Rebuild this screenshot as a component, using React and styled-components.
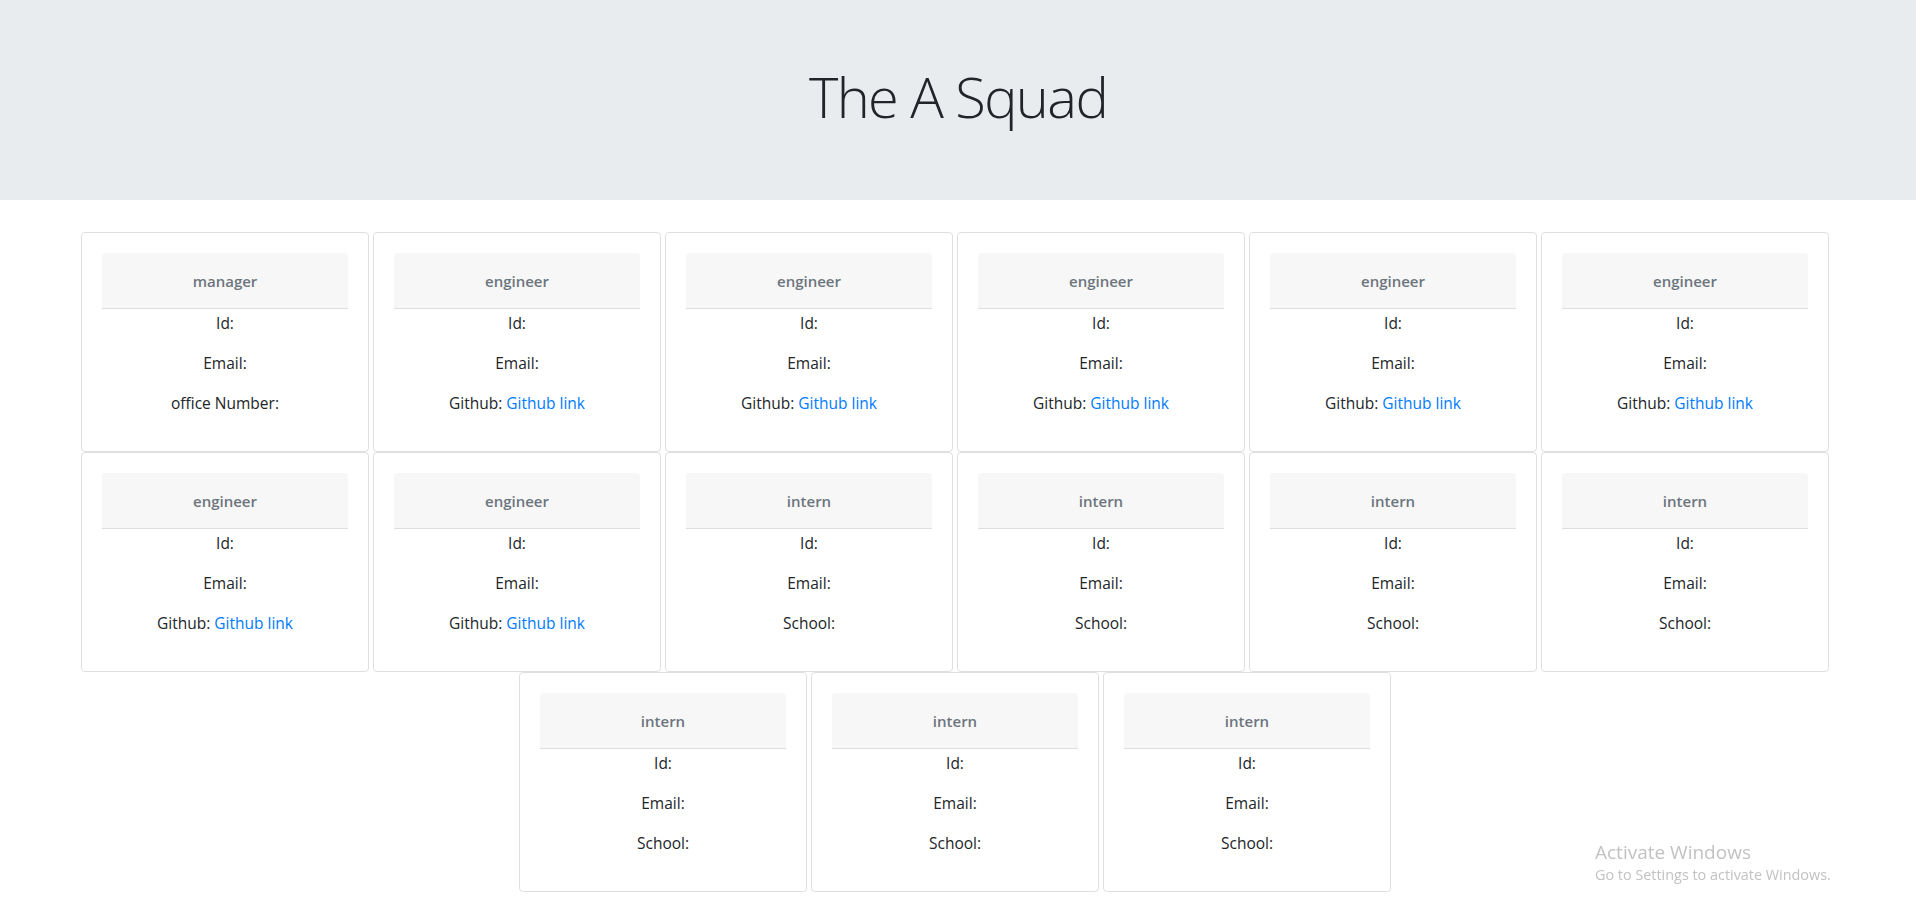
import React from "react";
import styled, { createGlobalStyle } from "styled-components";

const team = [
  { role: "manager", extra: "office Number:" },
  { role: "engineer", github: true },
  { role: "engineer", github: true },
  { role: "engineer", github: true },
  { role: "engineer", github: true },
  { role: "engineer", github: true },
  { role: "engineer", github: true },
  { role: "engineer", github: true },
  { role: "intern", extra: "School:" },
  { role: "intern", extra: "School:" },
  { role: "intern", extra: "School:" },
  { role: "intern", extra: "School:" },
  { role: "intern", extra: "School:" },
  { role: "intern", extra: "School:" },
  { role: "intern", extra: "School:" },
];

const App = () => {
  return (
    <>
      <GlobalStyle />
      <Jumbotron>
        <Title>The A Squad</Title>
      </Jumbotron>
      <Wrapper>
        <CardGrid>
          {team.map((member, i) => (
            <Card key={i}>
              <CardHeader>{member.role}</CardHeader>
              <CardBody>
                <Line>Id:</Line>
                <Line>Email:</Line>
                {member.github ? (
                  <Line>
                    Github: <Link href="#">Github link</Link>
                  </Line>
                ) : (
                  <Line>{member.extra}</Line>
                )}
              </CardBody>
            </Card>
          ))}
        </CardGrid>
      </Wrapper>
      <Watermark>
        <WatermarkTitle>Activate Windows</WatermarkTitle>
        <WatermarkText>Go to Settings to activate Windows.</WatermarkText>
      </Watermark>
    </>
  );
};

const GlobalStyle = createGlobalStyle`
  body {
    margin: 0;
    background: #fff;
    color: #212529;
    font-family: "Open Sans", "Noto Sans", sans-serif;
    font-size: 15.5px;
    line-height: 1.5;
  }
`;

const Jumbotron = styled.header`
  height: 200px;
  background-color: #e9ecef;
  display: flex;
  align-items: center;
  justify-content: center;
  margin-bottom: 32px;
  padding-bottom: 6px;
  box-sizing: border-box;
`;

const Title = styled.h1`
  margin: 0;
  font-size: 56px;
  font-weight: 300;
  line-height: 1.2;
  letter-spacing: -1.6px;
  color: #212529;
`;

const Wrapper = styled.main`
  padding-right: 6px;
`;

const CardGrid = styled.div`
  width: 1752px;
  margin: 0 auto;
  display: flex;
  flex-wrap: wrap;
  justify-content: center;
`;

const Card = styled.div`
  box-sizing: border-box;
  width: 288px;
  height: 220px;
  margin: 0 2px;
  padding: 20px;
  border: 1px solid rgba(0, 0, 0, 0.125);
  border-radius: 4px;
  text-align: center;
`;

const CardHeader = styled.div`
  box-sizing: border-box;
  height: 56px;
  padding-top: 2px;
  display: flex;
  align-items: center;
  justify-content: center;
  background-color: #f7f7f7;
  border-bottom: 1px solid #dfdfdf;
  border-radius: 3px 3px 0 0;
  color: #6c757d;
  font-size: 15px;
  font-weight: 600;
`;

const CardBody = styled.div`
  padding-top: 2px;
`;

const Line = styled.p`
  margin: 0 0 16px;
  line-height: 24px;
`;

const Link = styled.a`
  color: #007bff;
  text-decoration: none;
`;

const Watermark = styled.div`
  position: fixed;
  left: 1595px;
  top: 839px;
  color: #c2c2c2;
  font-family: "Open Sans", sans-serif;
  pointer-events: none;
`;

const WatermarkTitle = styled.div`
  font-size: 19px;
  line-height: 26px;
`;

const WatermarkText = styled.div`
  font-size: 14.4px;
  line-height: 20px;
`;

export default App;
